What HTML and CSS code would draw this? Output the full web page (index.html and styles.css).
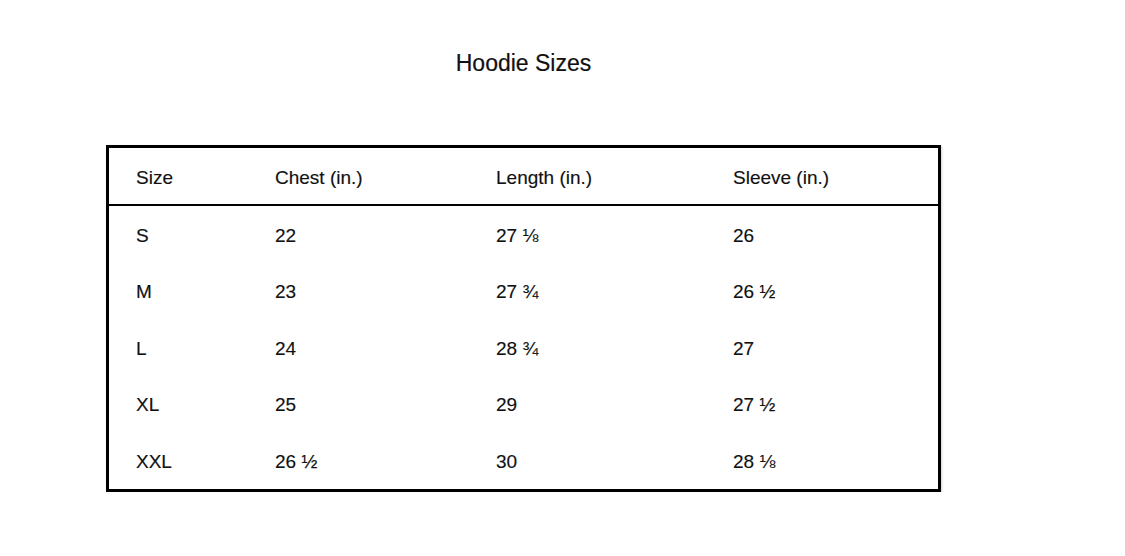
FILE: index.html
```html
<!DOCTYPE html>
<html>
<head>
<meta charset="utf-8">
<link rel="stylesheet" href="styles.css">
</head>
<body>
<div class="wrap">
  <h1 class="title">Hoodie Sizes</h1>
  <table class="sizes">
    <thead>
      <tr><th class="c1">Size</th><th class="c2">Chest (in.)</th><th class="c3">Length (in.)</th><th class="c4">Sleeve (in.)</th></tr>
    </thead>
    <tbody>
      <tr><td>S</td><td>22</td><td>27 ⅛</td><td>26</td></tr>
      <tr><td>M</td><td>23</td><td>27 ¾</td><td>26 ½</td></tr>
      <tr><td>L</td><td>24</td><td>28 ¾</td><td>27</td></tr>
      <tr><td>XL</td><td>25</td><td>29</td><td>27 ½</td></tr>
      <tr><td>XXL</td><td>26 ½</td><td>30</td><td>28 ⅛</td></tr>
    </tbody>
  </table>
</div>
</body>
</html>
```
FILE: styles.css
```css
html, body {
  margin: 0;
  padding: 0;
  background: #ffffff;
}
body {
  font-family: "Liberation Sans", Arial, "DejaVu Sans", sans-serif;
  color: #111111;
}
.wrap {
  width: 835px;
  margin-left: 106px;
  padding-top: 49px;
}
.title {
  margin: 0;
  font-size: 23px;
  font-weight: normal;
  line-height: 28px;
  text-align: center;
  height: 28px;
  -webkit-text-stroke: 0.2px #111;
}
.sizes {
  margin-top: 68px;
  width: 835px;
  border: 3px solid #000;
  border-collapse: separate;
  border-spacing: 0;
  table-layout: fixed;
  box-shadow: 1px 1px 2px rgba(0,0,0,0.18);
  font-size: 19px;
  -webkit-text-stroke: 0.15px #111;
}
.sizes th, .sizes td {
  box-sizing: border-box;
  text-align: left;
  font-weight: normal;
  padding: 3px 0 0 27px;
  white-space: nowrap;
}
.sizes th {
  height: 58px;
  padding-top: 4px;
  border-bottom: 2px solid #000;
}
.sizes td {
  height: 56.5px;
}
.c1 { width: 139px; }
.c2 { width: 221px; }
.c3 { width: 237px; }
.c4 { width: auto; }
```
